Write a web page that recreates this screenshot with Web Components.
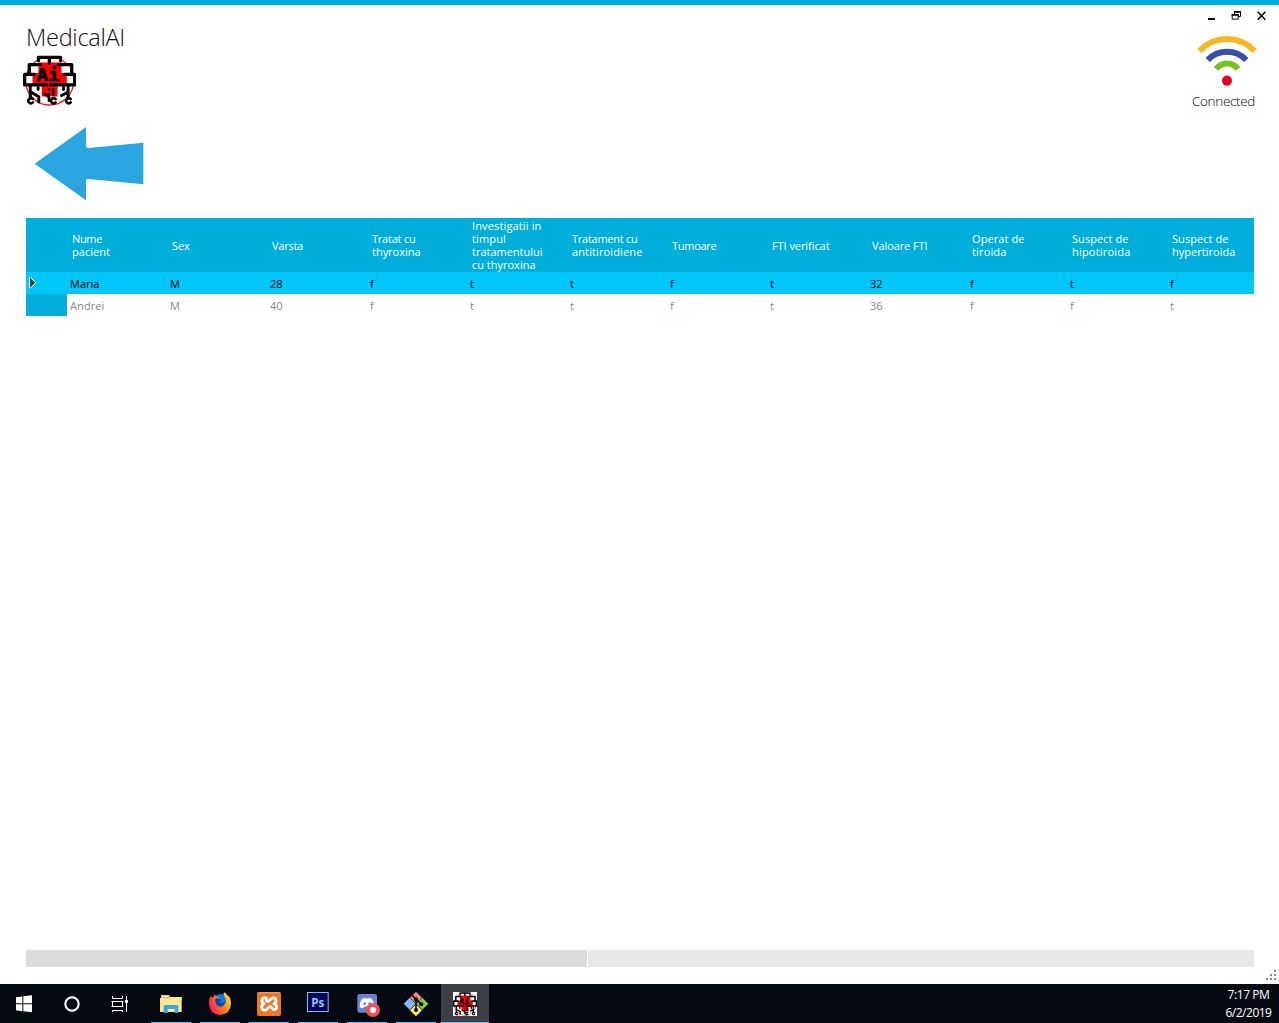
<!DOCTYPE html>
<html lang="ro">
<head>
<meta charset="utf-8">
<title>MedicalAI</title>
<style>
html,body{margin:0;height:100%;overflow:hidden;background:#fff}
body{font-family:"Open Sans","Noto Sans",sans-serif}
</style>
</head>
<body>
<medical-desktop></medical-desktop>

<script>
function define(name, html, Base = HTMLElement) {
  const t = document.createElement('template');
  t.innerHTML = html;
  customElements.define(name, class extends Base {
    constructor() {
      super();
      this.attachShadow({mode: 'open'}).append(t.content.cloneNode(true));
    }
  });
}

/* One line of text, tracked so that it takes exactly the width given in "w". */
customElements.define('fit-text', class extends HTMLElement {
  constructor() {
    super();
    this.attachShadow({mode: 'open'}).innerHTML =
      '<style>:host{display:block;white-space:nowrap}span{display:inline-block}</style><span></span>';
  }
  connectedCallback() {
    const s = this.shadowRoot.querySelector('span');
    s.textContent = this.getAttribute('text');
    const w = parseFloat(this.getAttribute('w'));
    const n = s.textContent.length;
    if (w && n > 1) {
      const natural = s.getBoundingClientRect().width;
      s.style.letterSpacing = ((w - natural) / n).toFixed(3) + 'px';
    }
  }
});

define('ai-logo', `
<style>:host{display:block}svg{display:block;width:100%;height:100%}</style>
<svg viewBox="15 13 161 155" preserveAspectRatio="none">
  <circle cx="96" cy="92" r="73" fill="#fff" stroke="#f11" stroke-width="4"/>
  <path fill="#f00" d="M62 34H132V46H140V66H152V106H120V139H72V106H40V68H58V46H62Z"/>
  <path fill="#fff" d="M64 24H92V36H64ZM99 24H127V36H99ZM37 47H62V68H37ZM132 47H160V68H132ZM23 77H44V101H23ZM148 77H169V101H148Z"/>
  <g fill="none" stroke="#000" stroke-width="10" stroke-linecap="round" stroke-linejoin="round">
    <path d="M62 30V20H129V30M95 20V38M34 62V42H68M122 42H163V62M49 72H20V104H86M98 104H172V72H141M163 62V72M34 62V72"/>
    <path stroke-width="9" d="M37 106V141M61 112V118M40 126L63 140V156M152 106V141M138 112V118M152 126L132 136"/>
    <path stroke-width="8" d="M94 118V118.500M94 132V132.500M107 117V133M81 131L94 142V152H100M45 147A8 7.500 0 1 0 45 157M114 147A8 7.500 0 1 0 114 157M160 147A8 7.500 0 1 0 160 157"/>
  </g>
  <text x="56" y="91" font-family="DejaVu Sans Mono" font-weight="700" font-size="52" textLength="70" lengthAdjust="spacingAndGlyphs" stroke="#000" stroke-width="2">Ai</text>
</svg>`);

define('wifi-status', `
<style>
:host{display:flex;flex-direction:column;align-items:center;font-weight:300;font-size:13.5px;line-height:20px;color:#000}
svg{display:block;width:64px;height:56px}
fit-text{margin:3px 7px 0 0}
</style>
<svg viewBox="75 96 192 168" fill="none" stroke-width="18">
  <path stroke="#f5b822" d="M88 153A114 114 0 0 1 254 153"/>
  <path stroke="#3850a2" d="M113 180A80 80 0 0 1 229 180"/>
  <path stroke="#74c424" d="M138 207A41 41 0 0 1 204 207"/>
  <ellipse cx="171" cy="242" rx="15" ry="15.5" fill="#e00028"/>
</svg>
<fit-text text="Connected" w="63"></fit-text>`);

define('window-controls', `
<style>:host{display:flex}svg{display:block;width:25px;height:25px}</style>
<svg viewBox="87 15 75 75"><path d="M114 54H135V60H114Z"/></svg>
<svg viewBox="162 15 75 75" fill="none" stroke="#000" stroke-width="3">
  <path d="M193.500 43V34.500H211.500V49.500H205M186.500 43.500H204.500V57.500H186.500Z"/>
  <path stroke-width="5" d="M192 35.500H213M185 44.500H206"/>
</svg>
<svg viewBox="237 15 75 75" fill="none" stroke="#000" stroke-width="4.500"><path d="M263 35L286 59M286 35L263 59"/></svg>`);

define('back-arrow', `
<style>:host{display:block}svg{display:block;width:110px;height:76px}</style>
<svg viewBox="42 33 330 228"><path fill="#2ba5df" d="M44 146L198 36V92Q198 99 206 99L370 83V208L206 192Q198 191 198 199V256Z"/></svg>`);

customElements.define('patient-grid', class extends HTMLElement {
  constructor() {
    super();
    const cols = [
      [['Nume', 30], ['pacient', 38]], [['Sex', 17.5]], [['Varsta', 31]],
      [['Tratat cu', 43.5], ['thyroxina', 48.5]],
      [['Investigatii in', 69.5], ['timpul', 34], ['tratamentului', 70.5], ['cu thyroxina', 63.5]],
      [['Tratament cu', 65.5], ['antitiroidiene', 70.5]], [['Tumoare', 44.5]],
      [['FTI verificat', 57.5]], [['Valoare FTI', 55.5]],
      [['Operat de', 52.5], ['tiroida', 34.5]],
      [['Suspect de', 56.5], ['hipotiroida', 58.5]],
      [['Suspect de', 56.5], ['hypertiroida', 63.5]]];
    const rows = [
      ['Maria', 'M', '28', 'f', 't', 't', 'f', 't', '32', 'f', 't', 'f'],
      ['Andrei', 'M', '40', 'f', 't', 't', 'f', 't', '36', 'f', 'f', 't']];
    const width = {Maria: 29.5, Andrei: 34.5};
    const line = (t, w) => `<fit-text text="${t}" w="${w}"></fit-text>`;
    this.attachShadow({mode: 'open'}).innerHTML = `
<style>
:host{display:block;overflow:hidden;font-size:11px}
.row{display:grid;grid-template-columns:41px repeat(12,100px);height:22px;line-height:22px;color:#888}
.row>div{padding:1px 0 0 3px;box-sizing:border-box;height:22px}
.row>.lead{background:#00aedb;padding:0}
.row.head{height:54px;line-height:13px;background:#00aedb;color:#fff}
.row.head>div{height:54px;padding:0 0 0 5px;display:flex;flex-direction:column;justify-content:center}
.row.sel,.row.sel>.lead{background:#00c6f9;color:#000}
svg{display:block;width:14px;height:22px}
</style>
<div class="row head"><div class="lead"></div>${cols.map(c => `<div>${c.map(l => line(...l)).join('')}</div>`).join('')}</div>
${rows.map((r, i) => `<div class="row ${i ? '' : 'sel'}"><div class="lead">${i ? '' :
  '<svg viewBox="0 0 14 22"><path d="M3.500 5.500H4.500L9.700 10.700L4.500 16H3.500Z" fill="#404040" stroke="#fff"/></svg>'}</div>${
  r.map(v => `<div>${line(v, width[v] || (v.length > 1 ? 12.5 : 0))}</div>`).join('')}</div>`).join('')}`;
  }
});

define('scroll-strip', `
<style>:host{display:flex;gap:1px;height:17px}.thumb{width:561px;background:#dbdbdb}.track{flex:1;background:#e8e8e8}</style>
<div class="thumb"></div><div class="track"></div>`);

define('size-grip', `
<style>:host{display:block;width:10px;height:10px}svg{display:block}</style>
<svg width="10" height="10" fill="#888"><path d="M8 0h2v2h-2zM4 4h2v2h-2zM8 4h2v2h-2zM0 8h2v2h-2zM4 8h2v2h-2zM8 8h2v2h-2z"/></svg>`);

define('app-window', `
<style>
:host{display:flex;flex-direction:column;height:984px;box-sizing:border-box;border-top:5px solid #00aedb;background:#fff}
header{display:flex;justify-content:space-between;height:117px}
.brand{padding:15px 0 0 23px}
.title{padding-left:3px;font-weight:300;font-size:23.500px;line-height:35px;color:#111}
ai-logo{width:53px;height:51px}
.right{display:flex;flex-direction:column;align-items:flex-end;padding-right:5px}
wifi-status{margin:2px 12px 0 0}
back-arrow{margin:4px 0 0 34px}
patient-grid{margin:16px 25px 0 26px;height:98px}
scroll-strip{margin:auto 25px 0 26px}
size-grip{margin:3px 3px 4px auto}
</style>
<header>
  <div class="brand"><div class="title"><fit-text text="MedicalAI" w="99"></fit-text></div><ai-logo></ai-logo></div>
  <div class="right"><window-controls></window-controls><wifi-status></wifi-status></div>
</header>
<back-arrow></back-arrow>
<patient-grid></patient-grid>
<scroll-strip></scroll-strip>
<size-grip></size-grip>`);

define('task-button', `
<style>
:host{display:flex;width:48px;height:39px;flex:none;box-sizing:border-box;justify-content:center;position:relative}
:host([running])::after{content:"";position:absolute;left:4px;right:4px;bottom:0;height:1px;background:#76b9ed}
:host([active]){background:#3b3f45}
:host([active])::after{left:0;right:0}
</style><slot></slot>`);

define('task-bar', `
<style>
:host{display:flex;height:39px;background:#050a12;color:#fff;justify-content:space-between}
.left{display:flex}
.apps{display:flex;gap:1px;margin-left:3px}
svg{display:block;width:48px;height:39px;flex:none}
ai-logo{width:24px;height:24px;margin-top:8px;background:#fff}
.clock{display:flex;flex-direction:column;align-items:center;width:61px;padding-top:2px;font-size:12px;line-height:18px}
</style>
<div class="left">
  <task-button><svg viewBox="0 12 144 117" fill="#fff"><path d="M48 52L67 49.500V70H48ZM70 49L96 46V70H70ZM48 73H67V93.500L48 91ZM70 73H96V97L70 94Z"/></svg></task-button>
  <task-button><svg viewBox="144 12 144 117"><circle cx="216" cy="72" r="20" fill="none" stroke="#fff" stroke-width="6"/></svg></task-button>
  <task-button><svg viewBox="288 12 144 117" fill="none" stroke="#fff" stroke-width="3"><path d="M337.500 48V55.500H367.500V48M334.500 64.500H370.500M334.500 79.500H370.500M337.500 64V80M367.500 64V80M337.500 96V91.500H367.500V96M379.500 48V96"/><path fill="#fff" stroke="none" d="M375 60H384V69H375Z"/></svg></task-button>
  <div class="apps">
    <task-button running><svg viewBox="441 12 144 117"><path fill="#e9b44c" d="M483 45H507L512 51H545V60H483Z"/><path fill="#fff" d="M486 47H504V51H486Z"/><path fill="#ffe693" d="M480 54H509L514 51H545V96H480Z"/><path fill="#35a9dc" d="M491 99V80Q491 75 496 75H530Q535 75 535 80V99H524V87H503V99Z"/></svg></task-button>
    <task-button running><svg viewBox="588 12 144 117">
      <defs><linearGradient id="fx" x1="0" y1=".7" x2="1" y2=".2"><stop stop-color="#f5156c"/><stop offset=".45" stop-color="#ff6a1c"/><stop offset="1" stop-color="#ffe62e"/></linearGradient></defs>
      <circle cx="662" cy="69" r="27" fill="#087dea"/>
      <path fill="url(#fx)" d="M632 48L639 54L644 43Q648 51 656 52Q662 54 653 62Q645 65 651 72Q662 82 674 73Q683 60 672 49Q667 43 673 37Q679 40 682 46Q692 49 693 70Q692 103 660 105Q628 103 627 70Q626 57 632 48Z"/>
      <path fill="#17459e" d="M645 58Q651 52 658 56L665 62L655 66L665 70L676 64Q675 79 661 81Q646 78 645 58Z"/></svg></task-button>
    <task-button running><svg viewBox="0 12 144 117"><rect x="36" y="36" width="72" height="72" rx="6" fill="#ef7626"/><path stroke="#ffa263" stroke-width="3" d="M40 38H104"/><path fill="none" stroke="#fff" stroke-width="8.500" stroke-linejoin="round" stroke-linecap="round" d="M65 55C52 48 45 64 57 71C44 78 51 96 64 89C71 85 70 80 77 80C82 80 81 90 87 89C98 87 97 74 87 71C97 66 94 51 82 54C74 57 76 64 69 64C62 64 63 59 65 55Z"/></svg></task-button>
    <task-button running><svg viewBox="147 12 144 117"><rect x="187.500" y="37.500" width="62" height="57" fill="#09005c" stroke="#7fc1ee" stroke-width="3"/><text x="199" y="80" font-family="Open Sans" font-size="35" font-weight="700" fill="#8dcaff" textLength="39" lengthAdjust="spacingAndGlyphs">Ps</text></svg></task-button>
    <task-button running><svg viewBox="294 12 144 117"><path fill="#6c84cb" d="M344 42H389Q396 42 396 49V107L385 98H344Q337 98 337 91V49Q337 42 344 42Z"/><path fill="#fff" d="M344 81Q344 67 350 58Q357 53 364 54L366 57L370 54Q379 54 383 60Q388 72 388 80L378 85L373 79H359L354 85Q348 84 344 81Z"/><circle cx="359" cy="71" r="4" fill="#6c84cb"/><circle cx="374" cy="71" r="4" fill="#6c84cb"/><circle cx="384" cy="90" r="21" fill="#ec5358"/><circle cx="384" cy="90" r="9" fill="#fff"/></svg></task-button>
    <task-button running><svg viewBox="441 12 144 117"><path fill="#f58084" d="M513 35L531 53L513 70L495 53Z"/><path fill="#80b8fb" d="M494 53L512 71L494 89L476 71Z"/><path fill="#80cc50" d="M532 53L550 71L532 89L514 71Z"/><path fill="#ffe778" d="M513 73L531 91L513 109L495 91Z"/><path stroke="#111" stroke-width="5" fill="none" d="M499 44L528 72M513 57V90"/><circle cx="513" cy="58" r="6"/><circle cx="529" cy="73" r="6"/><circle cx="513" cy="90" r="6"/></svg></task-button>
    <task-button running active><ai-logo></ai-logo></task-button>
  </div>
</div>
<div class="clock"><fit-text text="7:17 PM" w="42"></fit-text><fit-text text="6/2/2019" w="46"></fit-text></div>`);

define('medical-desktop', `
<style>:host{display:flex;flex-direction:column;width:1279px;height:1023px}</style>
<app-window></app-window><task-bar></task-bar>`);
</script>
</body>
</html>
